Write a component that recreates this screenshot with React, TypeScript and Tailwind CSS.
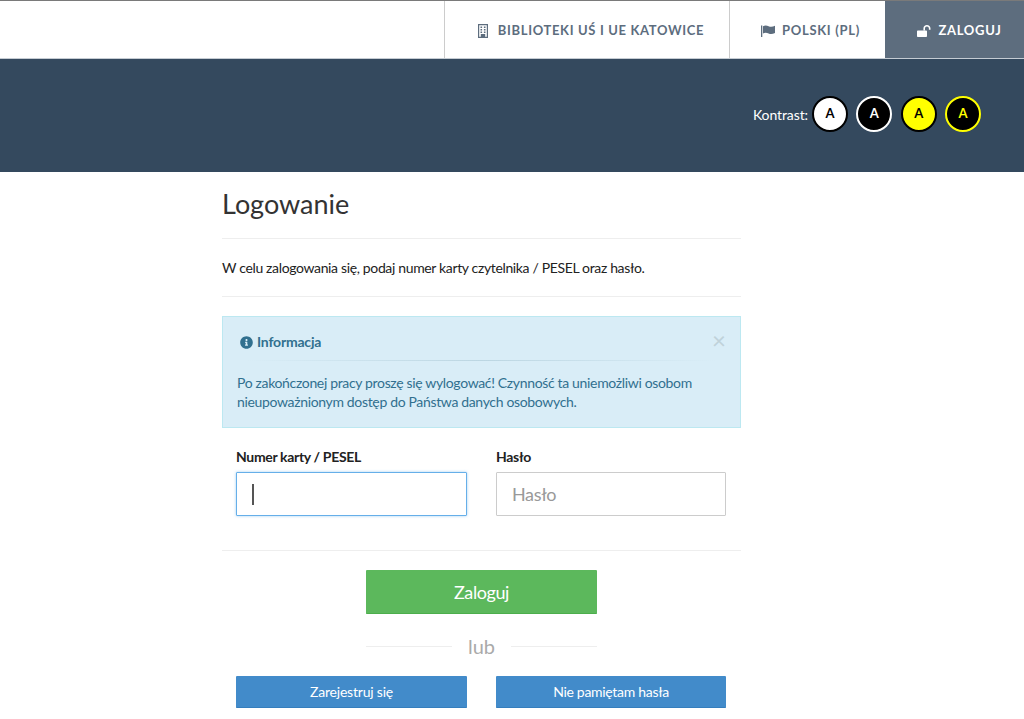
import React from 'react';
import { FaInfoCircle } from 'react-icons/fa';

const contrastButtons = [
  { id: 'white', cls: 'bg-white text-black border-black' },
  { id: 'black', cls: 'bg-black text-white border-white' },
  { id: 'yellow', cls: 'bg-[#ffff00] text-black border-black' },
  { id: 'black-yellow', cls: 'bg-black text-[#ffff00] border-[#ffff00]' },
];

const BuildingIcon = () => (
  <svg viewBox="0 0 10 14" className="h-[14px] w-[10px]" fill="currentColor">
    <path fillRule="evenodd" d="M0 0h10v14H0zM1.2 1.2v11.6h1.6V10h4.4v2.8h1.6V1.2z" />
    <path d="M2.5 2.5h1.6v1.4H2.5zM5.9 2.5h1.6v1.4H5.9zM2.5 5h1.6v1.4H2.5zM5.9 5h1.6v1.4H5.9zM2.5 7.5h1.6v1.4H2.5zM5.9 7.5h1.6v1.4H5.9zM3.6 11h2.8v2H3.6z" />
  </svg>
);

const FlagIcon = () => (
  <svg viewBox="0 0 14 12" className="h-[12px] w-[14px]" fill="currentColor">
    <path d="M0 0.5h1.3V12H0z" />
    <path d="M2 1.2C4 0 6 0.4 7.6 1.2c2 .9 4 .7 6.4-.4v7.2c-2.4 1.2-4.4 1.4-6.4.5C6 7.7 4 7.3 2 8.4z" />
  </svg>
);

const UnlockIcon = () => (
  <svg viewBox="0 0 14 12" className="h-[12px] w-[14px]" fill="currentColor">
    <path d="M0.8 5.4h8.4c.4 0 .8.3.8.8v5c0 .5-.4.8-.8.8H.8c-.5 0-.8-.3-.8-.8v-5c0-.5.3-.8.8-.8z" />
    <path d="M6.4 5.6V3.4C6.4 1.5 8 0 9.9 0s3.6 1.5 3.6 3.4v1.4h-1.6V3.4c0-1-.9-1.9-2-1.9s-1.9.9-1.9 1.9v2.2z" />
  </svg>
);

export default function App() {
  return (
    <div className="min-h-[719px] overflow-hidden bg-white font-['Lato',sans-serif] text-[#222]">
      {/* Top bar */}
      <nav className="flex h-[59px] justify-end border-y border-t-[#7a7a7a] border-b-[#c5ccd3] bg-white">
        <a className="flex w-[285px] items-center justify-center gap-[10px] border-l border-[#ccc] pt-[2px] pl-[8px] text-[13px] font-bold tracking-[0.66px] text-[#5d6d7e]">
          <BuildingIcon />
          <span>BIBLIOTEKI UŚ I UE KATOWICE</span>
        </a>
        <a className="flex w-[156px] items-center justify-center gap-[7px] border-l border-[#ccc] pt-[2px] pl-[6px] text-[13px] font-bold tracking-[0.7px] text-[#5d6d7e]">
          <FlagIcon />
          <span>POLSKI (PL)</span>
        </a>
        <a className="flex w-[139px] items-center justify-center gap-[7px] bg-[#5d6d7e] pt-[2px] pl-[10px] text-[13px] font-bold tracking-[0.7px] text-white">
          <UnlockIcon />
          <span>ZALOGUJ</span>
        </a>
      </nav>

      {/* Dark header */}
      <header className="flex h-[113px] items-center justify-end bg-[#34495e] pr-[43px] pb-[3px]">
        <span className="mr-[4px] text-[14px] tracking-[-0.1px] text-white">Kontrast:</span>
        <div className="flex gap-[8.33px]">
          {contrastButtons.map((b) => (
            <button key={b.id} className={`flex h-[36px] w-[36px] items-center justify-center rounded-full border-2 text-[13px] font-bold ${b.cls}`}>
              A
            </button>
          ))}
        </div>
      </header>

      {/* Login form */}
      <main className="ml-[222px] w-[519px]">
        <h1 className="pt-[13px] pb-[15px] text-[27px] leading-[38px] font-normal text-[#333]">Logowanie</h1>
        <div className="border-t border-[#eee]" />
        <p className="py-[20px] text-[14px] leading-[17px] tracking-[-0.35px]">W celu zalogowania się, podaj numer karty czytelnika / PESEL oraz hasło.</p>
        <div className="border-t border-[#eee]" />

        <div className="mt-[19px] h-[112px] border border-[#bce8f1] bg-[#d9edf7] px-[14px] pt-[15px] text-[#31708f]">
          <div className="flex items-start justify-between">
            <div className="flex items-center gap-[4px] pl-[3px] text-[14px] leading-[20px] font-bold tracking-[-0.2px]">
              <FaInfoCircle className="h-[13px] w-[13px]" />
              <span>Informacja</span>
            </div>
            <span className="h-[20px] text-[24px] leading-[16px] text-[#c0d2da]">×</span>
          </div>
          <div className="mx-[10px] mt-[8px] h-px bg-linear-to-r from-transparent via-[#bcd6e2] to-transparent" />
          <p className="mt-[12px] text-[14px] leading-[19px] tracking-[-0.34px]">
            Po zakończonej pracy proszę się wylogować! Czynność ta uniemożliwi osobom nieupoważnionym dostęp do Państwa danych osobowych.
          </p>
        </div>

        <div className="mt-[19px] grid grid-cols-[231px_230px] gap-[29px] px-[14px]">
          <label className="block">
            <span className="mb-[5px] block text-[14px] leading-[20px] font-bold tracking-[-0.33px]">Numer karty / PESEL</span>
            <div className="relative">
              <input autoFocus className="block h-[44px] w-full rounded-[1px] border border-[#66afe9] bg-white px-[16px] text-[18px] shadow-[0_0_3px_rgba(102,175,233,0.6)] outline-none" />
              <span className="absolute top-[12px] left-[16px] h-[21px] w-[2px] bg-[#555]" />
            </div>
          </label>
          <label className="block">
            <span className="mb-[5px] block text-[14px] leading-[20px] font-bold tracking-[-0.3px]">Hasło</span>
            <input placeholder="Hasło" className="block h-[44px] w-full rounded-[1px] border border-[#ccc] bg-white px-[15px] text-[18px] tracking-[-0.35px] outline-none placeholder:text-[#999]" />
          </label>
        </div>

        <div className="mt-[34px] border-t border-[#eee]" />

        <div className="mt-[19px] flex flex-col items-center">
          <button className="h-[44px] w-[231px] rounded-[1px] border-b border-[#4cae4c] bg-[#5cb85c] pt-[1px] text-[18px] tracking-[-0.4px] text-white">Zaloguj</button>
          <div className="mt-[14px] flex w-[231px] items-center gap-[16px] text-[20px] leading-[36px] text-[#aaa]">
            <div className="flex-1 border-t border-[#eee]" />
            <span>lub</span>
            <div className="flex-1 border-t border-[#eee]" />
          </div>
        </div>

        <div className="mt-[12px] grid grid-cols-[231px_230px] gap-[29px] px-[14px]">
          <button className="h-[32px] rounded-[1px] border-b border-[#357ebd] bg-[#428bca] text-[14px] tracking-[-0.2px] text-white">Zarejestruj się</button>
          <button className="h-[32px] rounded-[1px] border-b border-[#357ebd] bg-[#428bca] text-[14px] tracking-[-0.3px] text-white">Nie pamiętam hasła</button>
        </div>
      </main>
    </div>
  );
}
